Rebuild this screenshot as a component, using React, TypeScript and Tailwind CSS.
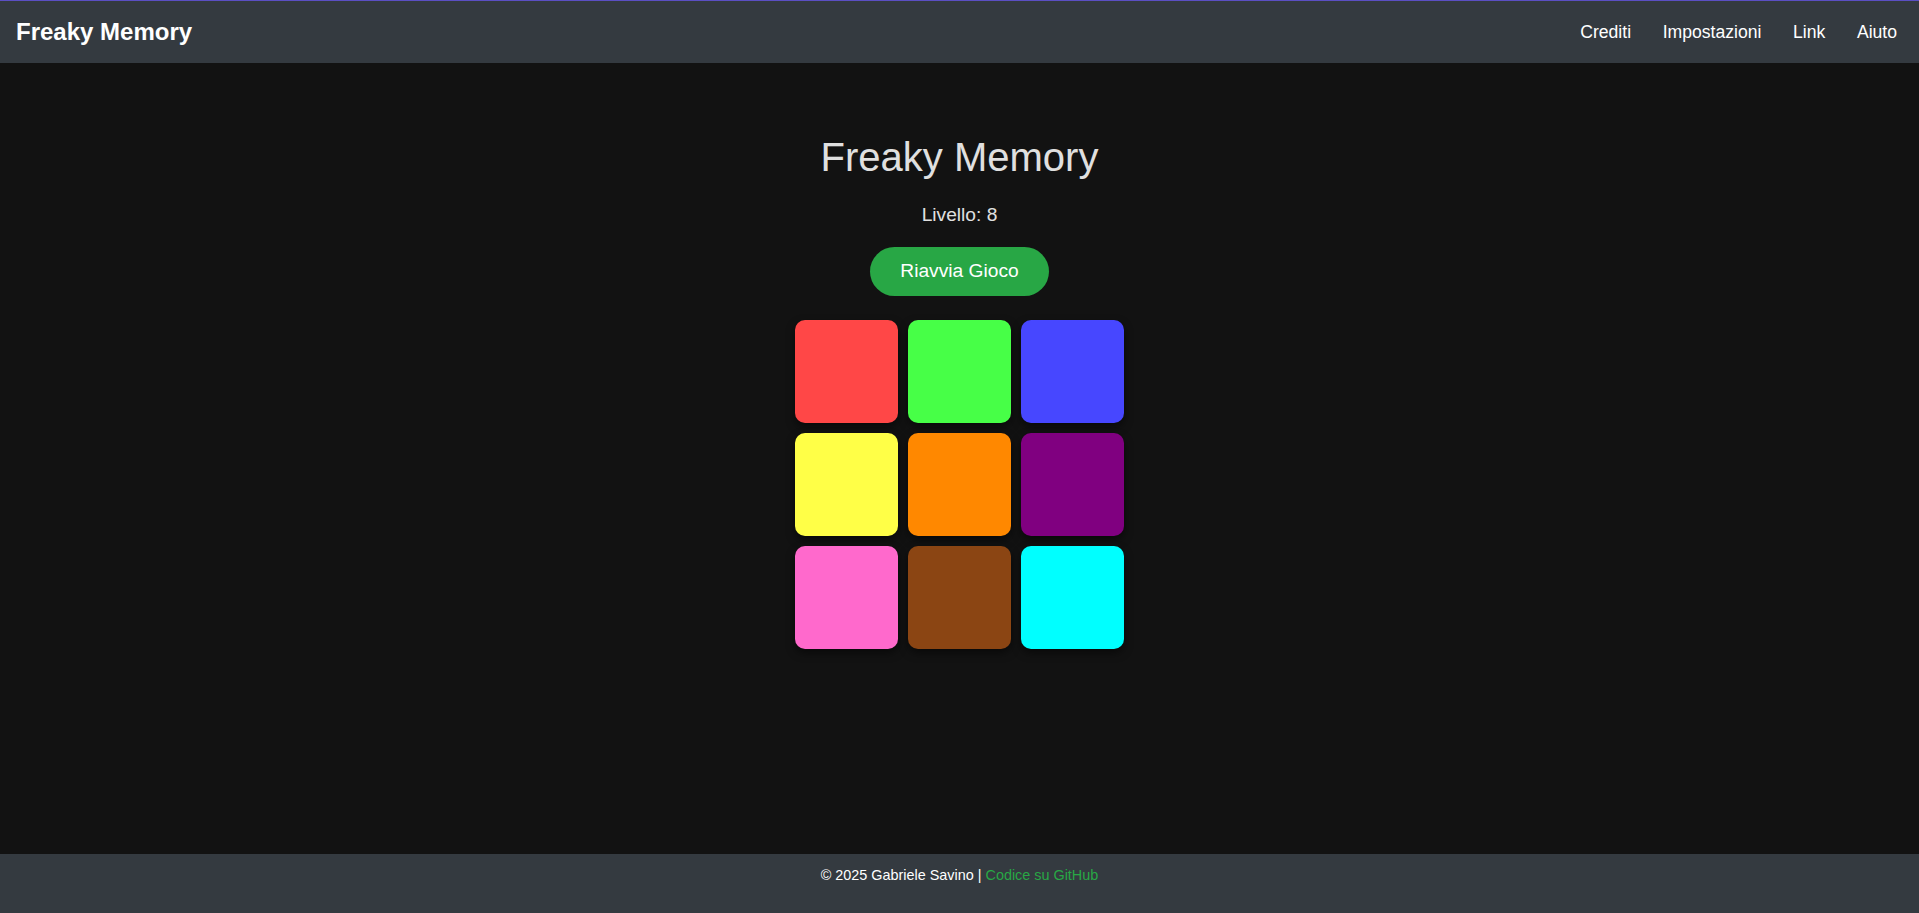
const tiles = [
  "bg-[#ff4747]",
  "bg-[#47ff47]",
  "bg-[#4747ff]",
  "bg-[#ffff47]",
  "bg-[#ff8800]",
  "bg-[#800080]",
  "bg-[#ff69cc]",
  "bg-[#8b4513]",
  "bg-[#00ffff]",
];

const links = ["Crediti", "Impostazioni", "Link", "Aiuto"];

export default function App() {
  return (
    <div className="flex h-screen flex-col bg-[#121212] font-['Liberation_Sans',Arial,sans-serif]">
      {/* Navbar */}
      <nav className="flex h-[63px] shrink-0 items-center justify-between border-t border-[#5b4fc4] bg-[#343a40] pl-4 pr-[22px]">
        <span className="text-[24px] font-bold text-white">Freaky Memory</span>
        <div className="flex items-center gap-[31.6px]">
          {links.map((l) => (
            <a key={l} className="cursor-pointer text-[17.6px] text-white">
              {l}
            </a>
          ))}
        </div>
      </nav>

      {/* Game */}
      <main className="flex flex-1 flex-col items-center pt-[70px]">
        <h1 className="text-[40px] leading-[48px] text-[#e0e0e0]">Freaky Memory</h1>
        <p className="mt-[20px] text-[19.2px] leading-[28.8px] text-[#e0e0e0]">Livello: 8</p>
        <button className="mt-[17px] h-[49px] rounded-full bg-[#28a745] px-[30px] text-[19.2px] text-white">
          Riavvia Gioco
        </button>
        <div className="mt-[24px] grid grid-cols-[repeat(3,103px)] gap-[10px]">
          {tiles.map((c, i) => (
            <div
              key={i}
              className={`h-[103px] w-[103px] rounded-[10px] shadow-[0_4px_8px_rgba(0,0,0,0.5)] ${c}`}
            />
          ))}
        </div>
      </main>

      {/* Footer */}
      <footer className="h-[59px] shrink-0 bg-[#343a40] pt-[11px] text-center text-[14.4px] text-white">
        © 2025 Gabriele Savino | <a className="text-[#28a745]">Codice su GitHub</a>
      </footer>
    </div>
  );
}
